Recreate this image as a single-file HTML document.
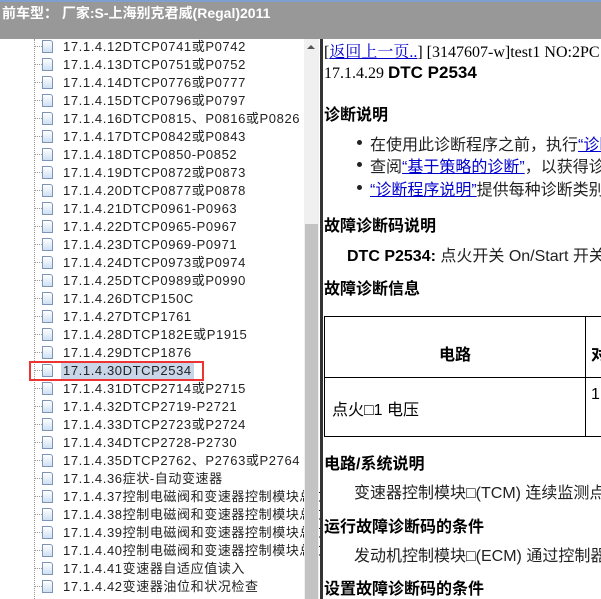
<!DOCTYPE html>
<html><head><meta charset="utf-8"><style>
*{margin:0;padding:0;box-sizing:border-box}
body{width:601px;height:599px;overflow:hidden;background:#fff;position:relative;font-family:"Liberation Sans","Noto Sans CJK SC",sans-serif}
#hdr{position:absolute;left:0;top:0;width:601px;height:39px;background:#989898;border-top:2px solid #7f9fd0}
#hdr span{position:absolute;left:2px;top:1px;color:#fff;font-size:14px;font-weight:bold;letter-spacing:0}
#tree{position:absolute;left:0;top:39px;width:320px;height:560px;background:#fff;overflow:hidden}
.vl{position:absolute;left:34px;top:0;height:560px;border-left:1px dotted #999}
.row{position:absolute;left:34px;height:18px;width:290px;font-size:13px;color:#222;letter-spacing:0.6px;white-space:nowrap}
.row .h{position:absolute;left:0;top:8px;width:8px;border-top:1px dotted #999}
.row .ic{position:absolute;left:8px;top:2px;width:11px;height:13px;border:1px solid #7b95b8;background:linear-gradient(#fff,#cfe0f3);border-radius:0 3px 0 0}
.row .t{position:absolute;left:29px;top:0px;line-height:17px}
.sel .t{background:#c9d6ea;padding:0 2px;left:27px}
#box{position:absolute;left:29px;top:361px;width:175px;height:20px;border:2px solid #e33}
#sb{position:absolute;left:304px;top:39px;width:15px;height:560px;background:#f0f0f0}
#thumb{position:absolute;left:305px;top:224px;width:13px;height:375px;background:#c3c3c3}
#arr{position:absolute;left:307px;top:45px;width:0;height:0;border-left:4px solid transparent;border-right:4px solid transparent;border-bottom:4px solid #555}
#div{position:absolute;left:320px;top:39px;width:3px;height:560px;background:#333}
#c{position:absolute;left:323px;top:39px;width:278px;height:560px;overflow:hidden;color:#000}
.a{position:absolute;white-space:nowrap}
.s{font-family:"Liberation Serif","Noto Serif CJK SC",serif;font-size:16px}
.h3{font-size:16px;font-weight:bold;left:1px}
.p{font-size:16px;color:#222}
a{color:#00c;text-decoration:underline}
.b{position:absolute;width:5px;height:5px;border-radius:50%;background:#222}
table{position:absolute;left:1px;top:277px;border-collapse:collapse;table-layout:fixed;width:320px}
td{border:1px solid #000;font-size:16px;overflow:hidden;white-space:nowrap}
</style></head><body>
<div id="hdr"><span>前车型： 厂家:S-上海别克君威(Regal)2011</span></div>
<div id="tree">
<div class="vl"></div>
<div class="row" style="top:-1px"><i class="h"></i><i class="ic"></i><span class="t">17.1.4.12DTCP0741或P0742</span></div>
<div class="row" style="top:17px"><i class="h"></i><i class="ic"></i><span class="t">17.1.4.13DTCP0751或P0752</span></div>
<div class="row" style="top:35px"><i class="h"></i><i class="ic"></i><span class="t">17.1.4.14DTCP0776或P0777</span></div>
<div class="row" style="top:53px"><i class="h"></i><i class="ic"></i><span class="t">17.1.4.15DTCP0796或P0797</span></div>
<div class="row" style="top:71px"><i class="h"></i><i class="ic"></i><span class="t">17.1.4.16DTCP0815、P0816或P0826</span></div>
<div class="row" style="top:89px"><i class="h"></i><i class="ic"></i><span class="t">17.1.4.17DTCP0842或P0843</span></div>
<div class="row" style="top:107px"><i class="h"></i><i class="ic"></i><span class="t">17.1.4.18DTCP0850-P0852</span></div>
<div class="row" style="top:125px"><i class="h"></i><i class="ic"></i><span class="t">17.1.4.19DTCP0872或P0873</span></div>
<div class="row" style="top:143px"><i class="h"></i><i class="ic"></i><span class="t">17.1.4.20DTCP0877或P0878</span></div>
<div class="row" style="top:161px"><i class="h"></i><i class="ic"></i><span class="t">17.1.4.21DTCP0961-P0963</span></div>
<div class="row" style="top:179px"><i class="h"></i><i class="ic"></i><span class="t">17.1.4.22DTCP0965-P0967</span></div>
<div class="row" style="top:197px"><i class="h"></i><i class="ic"></i><span class="t">17.1.4.23DTCP0969-P0971</span></div>
<div class="row" style="top:215px"><i class="h"></i><i class="ic"></i><span class="t">17.1.4.24DTCP0973或P0974</span></div>
<div class="row" style="top:233px"><i class="h"></i><i class="ic"></i><span class="t">17.1.4.25DTCP0989或P0990</span></div>
<div class="row" style="top:251px"><i class="h"></i><i class="ic"></i><span class="t">17.1.4.26DTCP150C</span></div>
<div class="row" style="top:269px"><i class="h"></i><i class="ic"></i><span class="t">17.1.4.27DTCP1761</span></div>
<div class="row" style="top:287px"><i class="h"></i><i class="ic"></i><span class="t">17.1.4.28DTCP182E或P1915</span></div>
<div class="row" style="top:305px"><i class="h"></i><i class="ic"></i><span class="t">17.1.4.29DTCP1876</span></div>
<div class="row sel" style="top:323px"><i class="h"></i><i class="ic"></i><span class="t">17.1.4.30DTCP2534</span></div>
<div class="row" style="top:341px"><i class="h"></i><i class="ic"></i><span class="t">17.1.4.31DTCP2714或P2715</span></div>
<div class="row" style="top:359px"><i class="h"></i><i class="ic"></i><span class="t">17.1.4.32DTCP2719-P2721</span></div>
<div class="row" style="top:377px"><i class="h"></i><i class="ic"></i><span class="t">17.1.4.33DTCP2723或P2724</span></div>
<div class="row" style="top:395px"><i class="h"></i><i class="ic"></i><span class="t">17.1.4.34DTCP2728-P2730</span></div>
<div class="row" style="top:413px"><i class="h"></i><i class="ic"></i><span class="t">17.1.4.35DTCP2762、P2763或P2764</span></div>
<div class="row" style="top:431px"><i class="h"></i><i class="ic"></i><span class="t">17.1.4.36症状-自动变速器</span></div>
<div class="row" style="top:449px"><i class="h"></i><i class="ic"></i><span class="t">17.1.4.37控制电磁阀和变速器控制模块总成</span></div>
<div class="row" style="top:467px"><i class="h"></i><i class="ic"></i><span class="t">17.1.4.38控制电磁阀和变速器控制模块总成</span></div>
<div class="row" style="top:485px"><i class="h"></i><i class="ic"></i><span class="t">17.1.4.39控制电磁阀和变速器控制模块总成</span></div>
<div class="row" style="top:503px"><i class="h"></i><i class="ic"></i><span class="t">17.1.4.40控制电磁阀和变速器控制模块总成</span></div>
<div class="row" style="top:521px"><i class="h"></i><i class="ic"></i><span class="t">17.1.4.41变速器自适应值读入</span></div>
<div class="row" style="top:539px"><i class="h"></i><i class="ic"></i><span class="t">17.1.4.42变速器油位和状况检查</span></div>
</div>
<div id="box"></div>
<div id="sb"></div><div id="thumb"></div><div id="arr"></div>
<div id="div"></div>
<div id="c">
<div class="a s" style="left:1px;top:0px">[<a>返回上一页..</a>] [3147607-w]test1 NO:2PC</div>
<div class="a s" style="left:1px;top:24px">17.1.4.29 <b style="font-family:'Liberation Sans',sans-serif;font-size:17px">DTC P2534</b></div>
<div class="a h3" style="top:62px">诊断说明</div>
<div class="b" style="left:34px;top:101px"></div>
<div class="a p" style="left:47px;top:92px">在使用此诊断程序之前，执行<a>“诊断系统检查”</a></div>
<div class="b" style="left:34px;top:123px"></div>
<div class="a p" style="left:47px;top:114px">查阅<a>“基于策略的诊断”</a>，以获得诊断方法</div>
<div class="b" style="left:34px;top:146px"></div>
<div class="a p" style="left:47px;top:137px"><a>“诊断程序说明”</a>提供每种诊断类别的概述</div>
<div class="a h3" style="top:173px">故障诊断码说明</div>
<div class="a p" style="left:24px;top:203px"><b style="color:#000">DTC P2534:</b> 点火开关 On/Start 开关电路电压过低</div>
<div class="a h3" style="top:236px">故障诊断信息</div>
<table><colgroup><col style="width:261px"><col style="width:59px"></colgroup><tr><td style="height:61px;text-align:center;font-weight:bold;padding-top:12px">电路</td><td style="padding-left:5px;padding-top:12px;font-weight:bold">对</td></tr>
<tr><td style="height:59px;padding-left:7px;padding-top:2px">点火□1 电压</td><td style="padding-left:5px;vertical-align:top;padding-top:8px">1</td></tr></table>
<div class="a h3" style="top:411px">电路/系统说明</div>
<div class="a p" style="left:31px;top:440px">变速器控制模块□(TCM) 连续监测点火电压</div>
<div class="a h3" style="top:474px">运行故障诊断码的条件</div>
<div class="a p" style="left:31px;top:503px">发动机控制模块□(ECM) 通过控制器局域网</div>
<div class="a h3" style="top:536px">设置故障诊断码的条件</div>
</div>
</body></html>
